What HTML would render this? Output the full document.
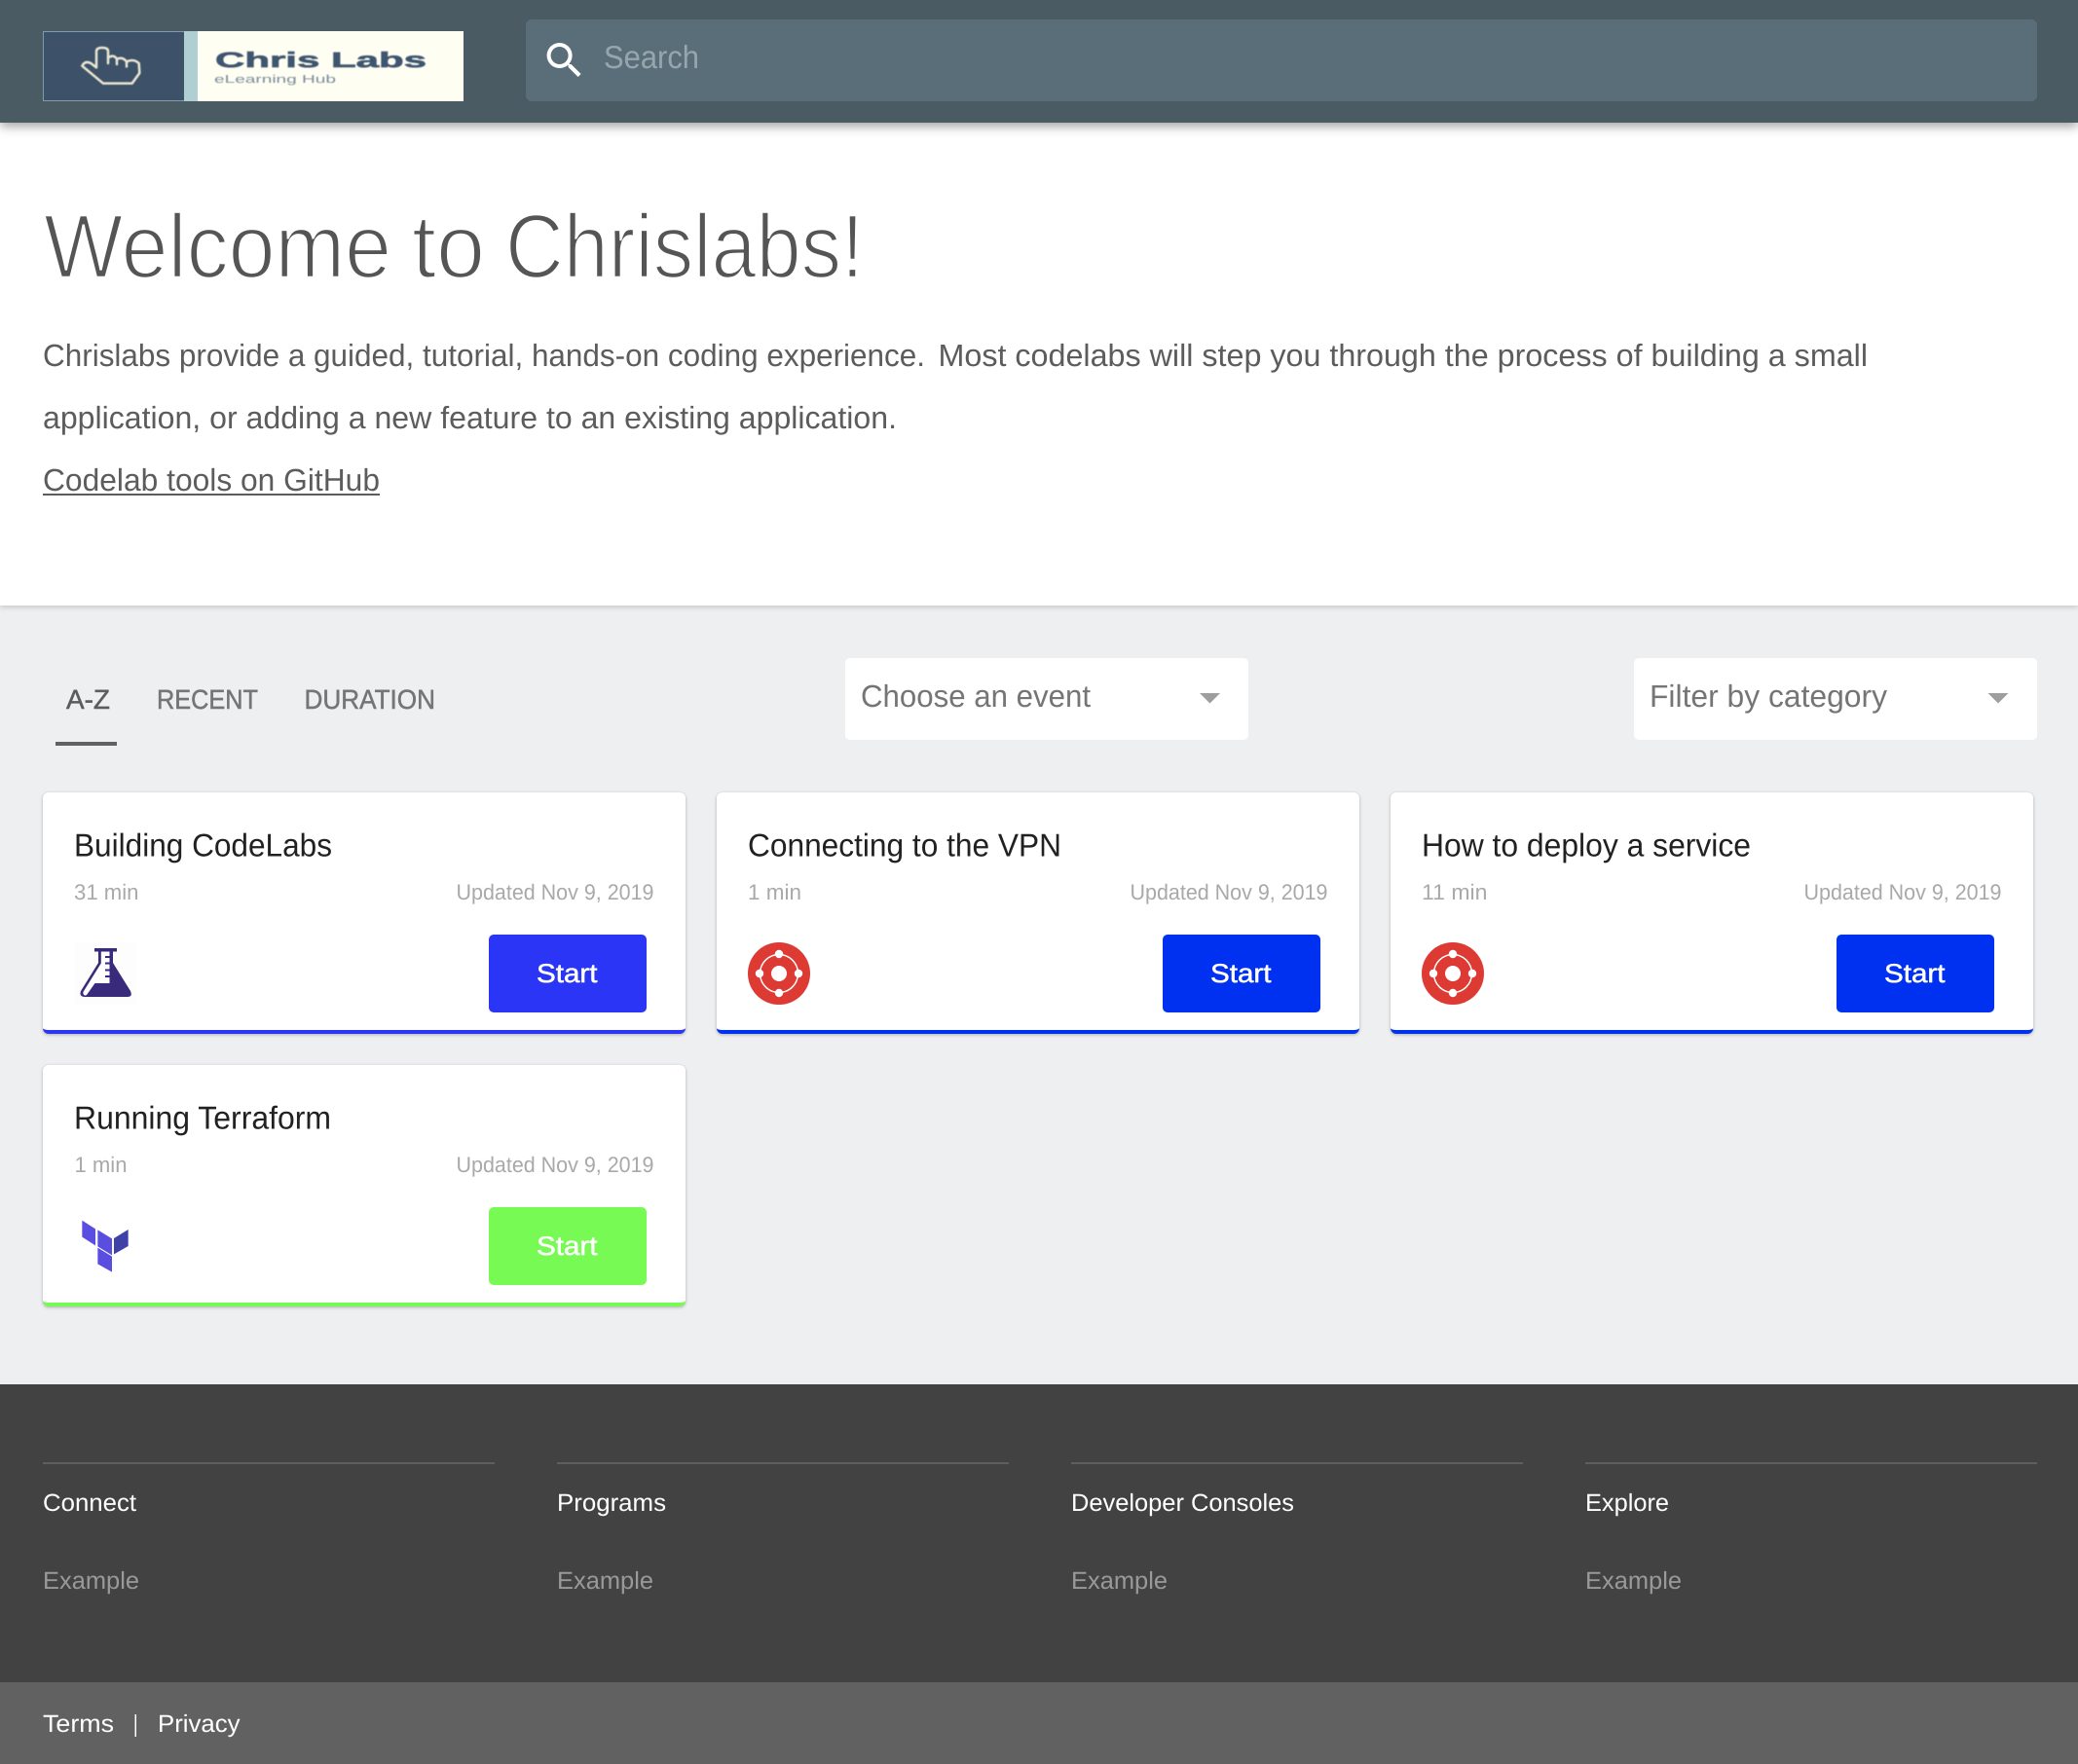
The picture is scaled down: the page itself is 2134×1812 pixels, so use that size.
<!DOCTYPE html>
<html lang="en">
<head>
<meta charset="utf-8">
<title>Welcome to Chrislabs!</title>
<style>
html,body{margin:0;padding:0;background:#eeeff1}
body{position:relative;width:2134px;height:1812px;overflow:hidden;font-family:"Liberation Sans",sans-serif}
.b{position:absolute;box-sizing:border-box}
#hdr{left:0;top:0;width:2134px;height:126px;background:#4a5b63;box-shadow:0 4px 10px rgba(0,0,0,.36);z-index:3}
#search{left:540px;top:20px;width:1552px;height:84px;background:#5a6e79;border-radius:6px}
#hero{left:0;top:126px;width:2134px;height:496px;background:#fff;box-shadow:0 2px 5px rgba(0,0,0,.16);z-index:2}
.sel{top:676px;width:414px;height:84px;background:#fff;border-radius:5px}
.card{width:660px;height:248px;background:#fff;border-radius:6px;border-bottom:4px solid #2a35f5;box-shadow:0 1px 3px rgba(0,0,0,.28)}
.btn{width:162px;height:80px;border-radius:5px}
#foot{left:0;top:1422px;width:2134px;height:306px;background:#424242}
#sub{left:0;top:1728px;width:2134px;height:84px;background:#616161}
.ln{top:1502px;width:464px;height:2px;background:#5e5e5e}
svg#o{position:absolute;left:0;top:0;z-index:5}
svg text{font-family:"Liberation Sans",sans-serif;text-rendering:geometricPrecision}
.t{font-size:33px;fill:#212121}
.m{font-size:22.5px;fill:#a9a9a9}
.s{font-size:27px;fill:#fff;stroke:#fff;stroke-width:.5px}
.f{font-size:25px;fill:#fff}
.e{font-size:25px;fill:#999}
.p{font-size:32px;fill:#5c5c5c}
.h{font-size:93px;fill:#555;stroke:#fff;stroke-width:2.400px}
.tab{font-size:28px;fill:#757575;stroke:#757575;stroke-width:.5px}
</style>
</head>
<body>
<div class="b" id="hdr">
  <div class="b" id="search"></div>
  <div class="b" style="left:44px;top:32px;width:432px;height:72px;background:#fffef2"></div>
  <div class="b" style="left:44px;top:32px;width:145px;height:72px;background:#3d5268;border:1px solid #7d9dab;border-right:0"></div>
  <div class="b" style="left:189px;top:32px;width:14px;height:72px;background:#b0cfd3"></div>
</div>
<div class="b" id="hero"></div>

<div class="b sel" style="left:868px"></div>
<div class="b sel" style="left:1678px"></div>

<div class="b card" style="left:44px;top:814px;border-bottom-color:#2a35f5"></div>
<div class="b card" style="left:736px;top:814px;border-bottom-color:#0030f0"></div>
<div class="b card" style="left:1428px;top:814px;border-bottom-color:#0030f0"></div>
<div class="b card" style="left:44px;top:1094px;border-bottom-color:#77fb54"></div>

<div class="b btn" style="left:502px;top:960px;background:#2a35f5"></div>
<div class="b btn" style="left:1194px;top:960px;background:#0030f0"></div>
<div class="b btn" style="left:1886px;top:960px;background:#0030f0"></div>
<div class="b btn" style="left:502px;top:1240px;background:#77fb54"></div>

<div class="b" id="foot"></div>
<div class="b" id="sub"></div>
<div class="b ln" style="left:44px"></div>
<div class="b ln" style="left:572px"></div>
<div class="b ln" style="left:1100px"></div>
<div class="b ln" style="left:1628px"></div>

<svg id="o" width="2134" height="1812" viewBox="0 0 2134 1812" xmlns="http://www.w3.org/2000/svg">
  <!-- logo -->
  <g style="filter:blur(.5px)">
    <g transform="translate(30,20) scale(.33333)" fill="none" stroke="#ece7d3" stroke-width="7.500" stroke-linejoin="round" stroke-linecap="round">
      <path d="M228 197L163 143Q172 126 190 135L207 148L207 98Q207 87 225 87Q243 87 243 98L243 118Q260 106 270 122Q288 114 300 130Q322 120 338 135L340 165L317 197Z"/>
      <path d="M243 118V135M270 122V138M300 130V145"/>
    </g>
    <text x="221" y="69" font-size="22" font-weight="700" fill="#3f5670" stroke="#3f5670" stroke-width=".6" textLength="217" lengthAdjust="spacingAndGlyphs">Chris Labs</text>
    <text x="220" y="85" font-size="11.5" fill="#7a8c9c" textLength="125" lengthAdjust="spacingAndGlyphs">eLearning Hub</text>
  </g>

  <!-- search -->
  <path transform="translate(555.6,38) scale(2)" fill="#fff" d="M15.5 14h-.79l-.28-.27A6.471 6.471 0 0 0 16 9.5 6.5 6.5 0 1 0 9.5 16c1.61 0 3.09-.59 4.23-1.57l.27.28v.79l5 4.99L20.49 19l-4.99-5zm-6 0C7.01 14 5 11.99 5 9.5S7.01 5 9.5 5 14 7.01 14 9.5 11.99 14 9.5 14z"/>
  <text x="620" y="70" font-size="33" fill="#97a6ae" textLength="98" lengthAdjust="spacingAndGlyphs">Search</text>

  <!-- hero -->
  <text class="h" x="45" y="285" textLength="357" lengthAdjust="spacingAndGlyphs">Welcome</text>
  <text class="h" x="423" y="285" textLength="75" lengthAdjust="spacingAndGlyphs">to</text>
  <text class="h" x="519" y="285" textLength="368" lengthAdjust="spacingAndGlyphs">Chrislabs!</text>
  <text class="p" x="44" y="376" textLength="906" lengthAdjust="spacingAndGlyphs">Chrislabs provide a guided, tutorial, hands-on coding experience.</text>
  <text class="p" x="963.500" y="376" textLength="954.500" lengthAdjust="spacingAndGlyphs">Most codelabs will step you through the process of building a small</text>
  <text class="p" x="44" y="440" textLength="877" lengthAdjust="spacingAndGlyphs">application, or adding a new feature to an existing application.</text>
  <text class="p" x="44" y="504" textLength="346" lengthAdjust="spacingAndGlyphs">Codelab tools on GitHub</text>
  <rect x="44" y="507" width="346" height="2" fill="#5c5c5c"/>

  <!-- tabs -->
  <text class="tab" x="68" y="728" style="fill:#5c5c5c;stroke:#5c5c5c" textLength="45" lengthAdjust="spacingAndGlyphs">A-Z</text>
  <text class="tab" x="161" y="728" textLength="104" lengthAdjust="spacingAndGlyphs">RECENT</text>
  <text class="tab" x="312.500" y="728" textLength="134.500" lengthAdjust="spacingAndGlyphs">DURATION</text>
  <rect x="57" y="762" width="63" height="4" fill="#616161"/>

  <!-- selects -->
  <text x="884" y="726" font-size="32" fill="#757575" textLength="236" lengthAdjust="spacingAndGlyphs">Choose an event</text>
  <path d="M1232 712h21l-10.500 10.500z" fill="#9e9e9e"/>
  <text x="1694" y="726" font-size="32" fill="#757575" textLength="244" lengthAdjust="spacingAndGlyphs">Filter by category</text>
  <path d="M2041.500 712h21l-10.500 10.500z" fill="#9e9e9e"/>

  <!-- card 1 -->
  <text class="t" x="76" y="879.500" textLength="265" lengthAdjust="spacingAndGlyphs">Building CodeLabs</text>
  <text class="m" x="76" y="924" textLength="66.500" lengthAdjust="spacingAndGlyphs">31 min</text>
  <text class="m" x="468.500" y="924" textLength="203" lengthAdjust="spacingAndGlyphs">Updated Nov 9, 2019</text>
  <text class="s" x="551" y="1009" textLength="62.500" lengthAdjust="spacingAndGlyphs">Start</text>
  <g transform="translate(60,960)">
    <rect x="17" y="8" width="64" height="64" fill="#fdfdfd"/>
    <path fill="#392a7c" d="M37 14H60V17.500H56V29L74 58Q76.500 64 71 64H27Q21 64 23 58L41 29V17.500H37Z"/>
    <path fill="#fff" d="M43.800 17.500H52.500V22H48V24H52.500V28.500H48V30.500H52.500V35.500H48V37.500H52.500V42H48V44H52.500V50H37.500L29 62Q26.500 63.500 25.500 61Q25 59.500 26 58L43.800 29.500Z"/>
  </g>

  <!-- card 2 -->
  <text class="t" x="768" y="879.500" textLength="322" lengthAdjust="spacingAndGlyphs">Connecting to the VPN</text>
  <text class="m" x="768" y="924" textLength="55" lengthAdjust="spacingAndGlyphs">1 min</text>
  <text class="m" x="1160.500" y="924" textLength="203" lengthAdjust="spacingAndGlyphs">Updated Nov 9, 2019</text>
  <text class="s" x="1243" y="1009" textLength="62.500" lengthAdjust="spacingAndGlyphs">Start</text>
  <g transform="translate(800,1000)">
    <circle r="32" fill="#dd3a33"/>
    <circle r="8" fill="#fff"/>
    <circle r="19.500" fill="none" stroke="#fff" stroke-width="1.500"/>
    <circle cy="-20" r="4.200" fill="#fff"/>
    <circle cy="20" r="4.200" fill="#fff"/>
    <circle cx="-20" r="4.200" fill="#fff"/>
    <circle cx="20" r="4.200" fill="#fff"/>
  </g>

  <!-- card 3 -->
  <text class="t" x="1460" y="879.500" textLength="338" lengthAdjust="spacingAndGlyphs">How to deploy a service</text>
  <text class="m" x="1460" y="924" textLength="67.500" lengthAdjust="spacingAndGlyphs">11 min</text>
  <text class="m" x="1852.500" y="924" textLength="203" lengthAdjust="spacingAndGlyphs">Updated Nov 9, 2019</text>
  <text class="s" x="1935" y="1009" textLength="62.500" lengthAdjust="spacingAndGlyphs">Start</text>
  <g transform="translate(1492,1000)">
    <circle r="32" fill="#dd3a33"/>
    <circle r="8" fill="#fff"/>
    <circle r="19.500" fill="none" stroke="#fff" stroke-width="1.500"/>
    <circle cy="-20" r="4.200" fill="#fff"/>
    <circle cy="20" r="4.200" fill="#fff"/>
    <circle cx="-20" r="4.200" fill="#fff"/>
    <circle cx="20" r="4.200" fill="#fff"/>
  </g>

  <!-- card 4 -->
  <text class="t" x="76" y="1159.500" textLength="264" lengthAdjust="spacingAndGlyphs">Running Terraform</text>
  <text class="m" x="76.500" y="1204" textLength="54" lengthAdjust="spacingAndGlyphs">1 min</text>
  <text class="m" x="468.500" y="1204" textLength="203" lengthAdjust="spacingAndGlyphs">Updated Nov 9, 2019</text>
  <text class="s" x="551" y="1289" textLength="62.500" lengthAdjust="spacingAndGlyphs">Start</text>
  <g transform="translate(60,1240) scale(.33333)">
    <path fill="#5a4ee0" d="M73 41L114 67V118L73 92Z"/>
    <path fill="#5a4ee0" d="M121 70L165 97V148L121 121Z"/>
    <path fill="#5a4ee0" d="M121 125L165 152V200L121 175Z"/>
    <path fill="#3f40a8" d="M171 96L215 69V120L171 145Z"/>
  </g>

  <!-- footer -->
  <text class="f" x="44" y="1552" textLength="96" lengthAdjust="spacingAndGlyphs">Connect</text>
  <text class="f" x="572" y="1552" textLength="112" lengthAdjust="spacingAndGlyphs">Programs</text>
  <text class="f" x="1100" y="1552" textLength="229" lengthAdjust="spacingAndGlyphs">Developer Consoles</text>
  <text class="f" x="1628" y="1552" textLength="86" lengthAdjust="spacingAndGlyphs">Explore</text>
  <text class="e" x="44" y="1632" textLength="99" lengthAdjust="spacingAndGlyphs">Example</text>
  <text class="e" x="572" y="1632" textLength="99" lengthAdjust="spacingAndGlyphs">Example</text>
  <text class="e" x="1100" y="1632" textLength="99" lengthAdjust="spacingAndGlyphs">Example</text>
  <text class="e" x="1628" y="1632" textLength="99" lengthAdjust="spacingAndGlyphs">Example</text>
  <text class="f" x="44" y="1779" textLength="73" lengthAdjust="spacingAndGlyphs">Terms</text>
  <rect x="138.500" y="1761" width="1.500" height="23" fill="#fff"/>
  <text class="f" x="162" y="1779" textLength="84.500" lengthAdjust="spacingAndGlyphs">Privacy</text>
</svg>
</body>
</html>
